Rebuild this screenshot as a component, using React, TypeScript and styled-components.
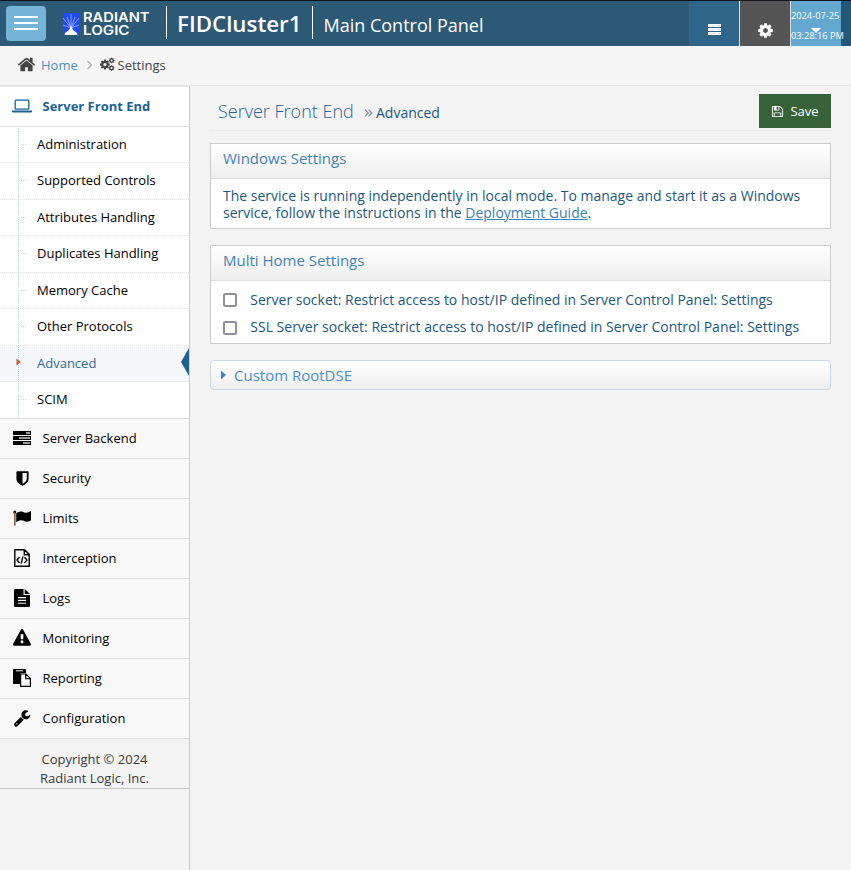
import React from "react";
import styled, { createGlobalStyle, css } from "styled-components";

const Global = createGlobalStyle`
  * { box-sizing: border-box; }
  html, body { margin: 0; padding: 0; background: #f3f3f3; }
  body { font-family: "Open Sans", sans-serif; font-size: 13px; color: #393939; }
  a { color: inherit; }
`;

const COG =
  "M1152 896q0-106-75-181t-181-75-181 75-75 181 75 181 181 75 181-75 75-181zm512-109v222q0 12-8 23t-20 13l-185 28q-19 54-39 91 35 50 107 138 10 12 10 25t-9 23q-27 37-99 108t-94 71q-12 0-26-9l-138-108q-44 23-91 38-16 136-29 186-7 28-36 28h-222q-14 0-24.500-8.500t-11.500-21.500l-28-184q-49-16-90-37l-141 107q-10 9-25 9-14 0-25-11-126-114-165-168-7-10-7-23 0-12 8-23 15-21 51-66.500t54-70.500q-27-50-41-99l-183-27q-13-2-21-12.500t-8-23.500v-222q0-12 8-23t19-13l186-28q14-46 39-92-40-57-107-138-10-12-10-24 0-10 9-23 26-36 98.500-107.500t94.500-71.500q13 0 26 10l138 107q44-23 91-38 16-136 29-186 7-28 36-28h222q14 0 24.500 8.500t11.500 21.500l28 184q49 16 90 37l142-107q9-9 24-9 13 0 25 10 129 119 165 170 7 8 7 22 0 12-8 23-15 21-51 66.500t-54 70.500q26 50 41 98l183 28q13 2 21 12.500t8 23.500z";
const HOME =
  "M1472 992v480q0 26-19 45t-45 19h-384v-384h-256v384h-384q-26 0-45-19t-19-45v-480q0-1 .5-3t.5-3l575-474 575 474q1 2 1 6zm223-69l-62 74q-8 9-21 11h-3q-13 0-21-7l-692-577-692 577q-12 8-24 7-13-2-21-11l-62-74q-8-10-7-23.500t11-21.500l719-599q32-26 76-26t76 26l244 204v-195q0-14 9-23t23-9h192q14 0 23 9t9 23v408l219 182q10 8 11 21.500t-7 23.500z";
const WRENCH =
  "M448 1472q0-26-19-45t-45-19-45 19-19 45 19 45 45 19 45-19 19-45zm644-420l-682 682q-37 37-90 37-52 0-91-37l-106-108q-38-36-38-90 0-53 38-91l681-681q39 98 114.500 173.500t173.500 114.500zm634-435q0 39-23 106-47 134-164.500 217.500t-258.500 83.500q-185 0-316.500-131.500t-131.500-316.500 131.500-316.500 316.500-131.500q58 0 121.500 16.500t107.500 46.500q16 11 16 28t-16 28l-293 169v224l193 107q5-3 79-48.500t135.500-81 70.500-35.500q15 0 23.500 10t8.500 25z";
const FLOPPY =
  "M512 1536h768v-384h-768v384zm896 0h128v-896q0-14-10-38.500t-20-34.500l-281-281q-10-10-34-20t-39-10v416q0 40-28 68t-68 28h-576q-40 0-68-28t-28-68v-416h-128v1280h128v-416q0-40 28-68t68-28h832q40 0 68 28t28 68v416zm-384-928v-320q0-13-9.500-22.500t-22.500-9.500h-192q-13 0-22.500 9.500t-9.500 22.500v320q0 13 9.500 22.500t22.500 9.500h192q13 0 22.500-9.500t9.500-22.500zm640 32v928q0 40-28 68t-68 28h-1344q-40 0-68-28t-28-68v-1344q0-40 28-68t68-28h928q40 0 88 20t76 48l280 280q28 28 48 76t20 88z";
const WARNING =
  "M1024 1375v-190q0-14-9.500-23.500t-22.500-9.500h-192q-13 0-22.500 9.500t-9.500 23.500v190q0 14 9.500 23.500t22.500 9.500h192q13 0 22.500-9.500t9.500-23.500zm-2-374l18-459q0-12-10-19-13-11-24-11h-220q-11 0-24 11-10 7-10 21l17 457q0 10 10 16.500t24 6.500h185q14 0 23.500-6.500t10.500-16.500zm-14-934l768 1408q35 63-2 126-17 29-46.500 46t-63.500 17h-1536q-34 0-63.500-17t-46.500-46q-37-63-2-126l768-1408q17-31 47-49t65-18 65 18 47 49z";
const SHIELD =
  "M1344 960v-640h-448v1137q119-63 213-137 235-184 235-360zm192-768v768q0 86-33.500 170.500t-83 150-118 127.500-126.500 103-121 77.500-89.500 49.500-42.500 20q-12 6-26 6t-26-6q-16-7-42.500-20t-89.500-49.500-121-77.500-126.500-103-118-127.500-83-150-33.500-170.500v-768q0-26 19-45t45-19h1152q26 0 45 19t19 45z";

const Glyph = ({ d, size }: { d: string; size: number }) => (
  <svg width={size} height={size} viewBox="0 0 1792 1792" fill="currentColor" overflow="visible">
    <path d={d} />
  </svg>
);

/* ---------- top bar ---------- */

const TopBar = styled.header`
  display: flex;
  height: 46px;
  border-top: 1px solid #101418;
  background: #2c5976;
  color: #fff;
`;
const MenuToggle = styled.button`
  display: flex;
  flex-direction: column;
  justify-content: center;
  gap: 4px;
  width: 40px;
  height: 35px;
  margin: 5px 0 0 6px;
  padding: 0 8px 1px;
  border: 0;
  border-radius: 4px;
  background: #75b3d7;
`;
const MenuLine = styled.span`
  height: 2px;
  background: #fff;
`;
const Logo = styled.div`
  display: flex;
  width: 103px;
  margin: 11px 0 0 17px;
  gap: 4px;
`;
const Wordmark = styled.svg`
  overflow: visible;
  font-family: Inter, sans-serif;
  font-size: 13px;
  font-weight: 600;
  fill: #fff;
`;
const Divider = styled.span`
  width: 1px;
  height: 33px;
  margin-top: 5px;
  background: #fff;
`;
const Cluster = styled.div`
  width: 145px;
  padding-left: 10px;
  font-size: 22.300px;
  font-weight: 580;
  line-height: 46px;
  white-space: nowrap;
`;
const PanelName = styled.div`
  flex: 1;
  padding-left: 10.500px;
  font-size: 18px;
  line-height: 48px;
  white-space: nowrap;
`;
const NavTile = styled.div<{ $bg: string; $w: number; $edge?: boolean }>`
  display: flex;
  justify-content: center;
  width: ${(p) => p.$w}px;
  padding-top: ${(p) => (p.$edge ? 21 : 23)}px;
  background: ${(p) => p.$bg};
  ${(p) => p.$edge && css`border-left: 1px solid #ddd;`}
`;
const Clock = styled.div`
  position: relative;
  width: 51px;
  border-left: 1px solid #ddd;
  background: #62a8d1;
  font-size: 9.250px;
  line-height: 20px;
  padding-top: 5px;
  white-space: nowrap;
`;
const Caret = styled.svg`
  position: absolute;
  left: 20px;
  top: 27px;
`;
const TopEnd = styled.div`
  width: 10px;
  background: #22587a;
`;

/* ---------- breadcrumb ---------- */

const Breadcrumb = styled.nav`
  display: flex;
  align-items: center;
  height: 40px;
  padding: 0 0 2px 17px;
  border-bottom: 1px solid #e5e5e5;
  background: #f5f5f5;
  line-height: 36px;
  color: #444;
`;
const HomeLink = styled.span`
  width: 45px;
  margin-left: 5px;
  color: #4c8fbd;
`;
const CrumbText = styled.span`
  margin-left: 2.500px;
`;

/* ---------- side bar ---------- */

const Body = styled.div`
  display: flex;
  height: 784px;
`;
const Sidebar = styled.aside`
  width: 190px;
  border-right: 1px solid #ccc;
  background: #f3f3f3;
`;
const Section = styled.div<{ $open?: boolean }>`
  display: flex;
  align-items: center;
  height: ${(p) => (p.$open ? 41 : 40)}px;
  padding: 0 0 1px 12px;
  border-bottom: 1px solid #e0e0e0;
  background: ${(p) => (p.$open ? "#fff" : "#f8f8f8")};
  color: ${(p) => (p.$open ? "#1d6095" : "#000")};
  font-weight: ${(p) => (p.$open ? 700 : 400)};
  ${(p) => p.$open && css`border-top: 1px solid #e5e5e5;`}
`;
const IconSlot = styled.span`
  display: flex;
  justify-content: center;
  align-items: center;
  width: 20px;
  height: 20px;
  margin-right: 10.500px;
`;
const SubMenu = styled.ul`
  position: relative;
  height: 292px;
  margin: 0;
  padding: 0;
  list-style: none;
  background: #fff;
  border-bottom: 1px solid #e0e0e0;
  &::before {
    content: "";
    position: absolute;
    z-index: 1;
    left: 18px;
    top: 1px;
    bottom: 0;
    border-left: 1px dotted #bcd5e8;
  }
`;
const SubItem = styled.li<{ $active?: boolean }>`
  position: relative;
  height: 36.450px;
  padding-left: 37px;
  line-height: 34px;
  color: ${(p) => (p.$active ? "#2b6a9b" : "#000")};
  background: ${(p) => (p.$active ? "#f5f7fb" : "#fff")};
  &:not(:last-child) {
    border-bottom: 1px dotted #e4e4e4;
  }
  &:last-child {
    height: 35.850px;
  }
  &::before {
    content: "";
    display: ${(p) => (p.$active ? "none" : "block")};
    position: absolute;
    left: 21px;
    top: 17px;
    width: 5px;
    border-top: 1px dotted #bcd5e8;
  }
`;
const ActiveMarks = styled.svg`
  position: absolute;
  z-index: 2;
  left: 0;
  top: -1px;
`;
const Copyright = styled.div`
  height: 50px;
  padding-top: 11px;
  border-bottom: 1px solid #c5c5c5;
  line-height: 19px;
  text-align: center;
  color: #393939;
`;

/* ---------- main ---------- */

const Main = styled.main`
  flex: 1;
  padding: 8px 20px 0;
`;
const PageHead = styled.div`
  display: flex;
  height: 37px;
  padding-left: 8px;
  border-bottom: 1px dotted #e2e2e2;
`;
const PageTitle = styled.h1`
  width: 146px;
  margin: 0;
  font-size: 18px;
  font-weight: 300;
  line-height: 35px;
  color: #2a6496;
  white-space: nowrap;
`;
const SubTitle = styled.div`
  display: flex;
  flex: 1;
  align-items: center;
  gap: 3px;
  height: 37px;
  font-size: 14px;
  color: #22587f;
`;
const SaveButton = styled.button`
  display: flex;
  align-items: center;
  justify-content: center;
  gap: 6px;
  width: 72px;
  height: 34px;
  padding: 0;
  border: 0;
  background: #376237;
  color: #fff;
  font: 13px "Open Sans", sans-serif;
`;
const Panel = styled.section<{ $top: number; $h: number }>`
  height: ${(p) => p.$h}px;
  margin-top: ${(p) => p.$top}px;
  border: 1px solid #ccc;
  background: #fff;
  color: #22587f;
  font-size: 14px;
`;
const PanelTitle = styled.h2`
  height: 35px;
  margin: 0;
  padding-left: 12px;
  border-bottom: 1px solid #ddd;
  background: linear-gradient(#fff, #eee);
  font-size: 15px;
  font-weight: 400;
  line-height: 28px;
  color: #4383b4;
`;
const PanelText = styled.p`
  margin: 0;
  padding: 8px 12px 0;
  line-height: 17px;
  white-space: nowrap;
`;
const GuideLink = styled.a`
  color: #3a80b5;
  text-decoration: underline;
`;
const CheckRow = styled.label`
  display: flex;
  align-items: center;
  height: 27.500px;
  padding-left: 12px;
  white-space: nowrap;
  &:first-of-type {
    margin-top: 4.500px;
  }
`;
const CheckBox = styled.input`
  appearance: none;
  width: 14px;
  height: 14px;
  margin: 2px 13.300px 0 0;
  border: 2px solid #8f8f9d;
  border-radius: 2px;
  background: #fff;
`;
const Collapsed = styled.button`
  display: flex;
  align-items: center;
  gap: 7px;
  width: 100%;
  height: 30px;
  margin-top: 16px;
  padding: 0 10px;
  border: 1px solid #cdd8e3;
  border-radius: 4px;
  background: linear-gradient(#fff, #eee);
  font: 15px "Open Sans", sans-serif;
  color: #4c8fcb;
`;

const LogoMark = () => (
  <svg width="16" height="24" viewBox="0 0 16 24">
    <rect y="1" width="16" height="22" fill="#2049f5" />
    <path
      d="M8 16V2M8 16L4 5M8 16l4-11M8 16L0 6M8 16l8-10M8 16l-8-3M8 16l8-3"
      stroke="#b9ccff"
      strokeWidth=".7"
      fill="none"
    />
    <path d="M8 14l2 4 4 3 .5 2h-13l.5-2 4-3z" fill="#fff" />
  </svg>
);
const Laptop = () => (
  <svg width="20" height="14" viewBox="0 0 20 14" fill="none">
    <rect x="3.200" y="1.200" width="13.600" height="9" rx=".8" stroke="#1d6095" strokeWidth="1.300" />
    <path d="M0 11.500h20v.7q0 1.300-1.500 1.300h-17Q0 13.500 0 12.200z" fill="#1d6095" />
  </svg>
);
const Backend = () => (
  <svg width="18" height="14" viewBox="0 0 18 14">
    <path d="M0 0h18v4H0zM0 5h18v4H0zM0 10h18v4H0z" />
    <path d="M13 1.300h4v1.400h-4zM6 6.300h11v1.400H6zM10 11.300h7v1.400h-7z" fill="#ccc" />
  </svg>
);
const Flag = () => (
  <svg width="19" height="16" viewBox="0 0 19 16">
    <circle cx="1.800" cy="1.900" r="1.500" />
    <path d="M1.200 2h1.300v13.500H1.200z" fill="#6b3a1a" />
    <path d="M3.200 3.200Q6 1 8.500 1.500c2.500.5 3.500 2 6 1 1.500-.6 3-1.800 3.500-1.200V10c-.3 1-3.500 2-5 1.700-2-.4-3-1.700-5.200-1.400-1.800.2-3 1.100-4.600 2z" />
  </svg>
);
const CodeFile = () => (
  <svg width="16" height="18" viewBox="0 0 16 18" fill="none" stroke="#000" strokeWidth="1.400">
    <path d="M.8.700h9.700l4.700 4.700v11.900H.8zM10.300.8v4.900h4.800M5.500 8.300L3 11l2.500 2.700M10.500 8.300L13 11l-2.500 2.700M8.900 7.300l-1.700 7.300" />
  </svg>
);
const TextFile = () => (
  <svg width="16" height="18" viewBox="0 0 16 18">
    <path d="M1 0h8.500v6H16v11q0 1-1 1H1q-1 0-1-1V1q0-1 1-1zM10.700 0L16 4.900h-5.300z" />
    <path d="M4 8.600h8M4 11.400h8M4 14.200h8" stroke="#f8f8f8" strokeWidth="1.100" />
  </svg>
);
const Paste = () => (
  <svg width="18" height="18" viewBox="0 0 18 18">
    <path d="M.7 0h11.600q.7 0 .7.700V4H8.500Q7 4 7 5.500V15H.7Q0 15 0 14.300V.7Q0 0 .7 0z" />
    <path d="M3 1.300h7v1H3z" fill="#f8f8f8" />
    <path d="M7.600 5h5.400l4.400 4.400v8H7.600zM12.700 5v4.700h4.700" fill="#f8f8f8" stroke="#000" strokeWidth="1.200" />
  </svg>
);
const Cogs = () => (
  <svg width="15" height="15" viewBox="0 0 15 15" fill="currentColor">
    <path d={COG} transform="translate(-.8 1.800) scale(.0064)" />
    <path d={COG} transform="translate(8.300 .2) scale(.0037)" />
    <path d={COG} transform="translate(8.300 7.700) scale(.0037)" />
  </svg>
);
const ServerStack = () => (
  <svg width="13" height="11" viewBox="0 0 13 11">
    <path d="M0 0h13v3H0zM0 4h13v3H0zM0 8h13v3H0z" fill="#fff" />
    <path d="M1 1.500h6M1 5.500h4M1 9.500h7" stroke="#d5dfe6" strokeWidth=".8" />
    <path d="M10.500 1.500h1M10.500 5.500h1M10.500 9.500h1" stroke="#8aa6ba" />
  </svg>
);

const subItems = [
  "Administration",
  "Supported Controls",
  "Attributes Handling",
  "Duplicates Handling",
  "Memory Cache",
  "Other Protocols",
  "Advanced",
  "SCIM",
];

const sections: [string, React.ReactNode][] = [
  ["Server Backend", <Backend />],
  ["Security", <Glyph d={SHIELD} size={17} />],
  ["Limits", <Flag />],
  ["Interception", <CodeFile />],
  ["Logs", <TextFile />],
  ["Monitoring", <Glyph d={WARNING} size={18} />],
  ["Reporting", <Paste />],
  ["Configuration", <Glyph d={WRENCH} size={18} />],
];

const checks = [
  "Server socket: Restrict access to host/IP defined in Server Control Panel: Settings",
  "SSL Server socket: Restrict access to host/IP defined in Server Control Panel: Settings",
];

export default function App() {
  return (
    <>
      <Global />
      <TopBar>
        <MenuToggle aria-label="Toggle menu">
          <MenuLine />
          <MenuLine />
          <MenuLine />
        </MenuToggle>
        <Logo>
          <LogoMark />
          <Wordmark width="68" height="24" viewBox="0 0 68 24">
            <text x="0" y="10" textLength="66.500" lengthAdjust="spacingAndGlyphs">RADIANT</text>
            <text x="0" y="22.500" textLength="46.500" lengthAdjust="spacingAndGlyphs">LOGIC</text>
          </Wordmark>
        </Logo>
        <Divider />
        <Cluster>FIDCluster1</Cluster>
        <Divider />
        <PanelName>Main Control Panel</PanelName>
        <NavTile $bg="#2f6589" $w={50}>
          <ServerStack />
        </NavTile>
        <NavTile $bg="#555" $w={51} $edge>
          <Glyph d={COG} size={17} />
        </NavTile>
        <Clock>
          <div>2024-07-25</div>
          <div>03:28:16 PM</div>
          <Caret width="10" height="5" viewBox="0 0 10 5">
            <path d="M0 0h10L5 5z" fill="#fff" />
          </Caret>
        </Clock>
        <TopEnd />
      </TopBar>
      <Breadcrumb>
        <Glyph d={HOME} size={19} />
        <HomeLink>Home</HomeLink>
        <svg width="14" height="10" viewBox="0 0 14 10" fill="none" stroke="#b2b6bf" strokeWidth="1.500">
          <path d="M1.500 1l4 4-4 4" />
        </svg>
        <Cogs />
        <CrumbText>Settings</CrumbText>
      </Breadcrumb>
      <Body>
        <Sidebar>
          <Section $open>
            <IconSlot><Laptop /></IconSlot>
            Server Front End
          </Section>
          <SubMenu>
            {subItems.map((name) => (
              <SubItem key={name} $active={name === "Advanced"}>
                {name}
                {name === "Advanced" && (
                  <ActiveMarks width="189" height="36" viewBox="0 0 189 36">
                    <path d="M16.500 13.500l4.500 3.500-4.500 3.500z" fill="#c86139" />
                    <path d="M189 3v28l-8-14z" fill="#20608f" />
                  </ActiveMarks>
                )}
              </SubItem>
            ))}
          </SubMenu>
          {sections.map(([name, icon]) => (
            <Section key={name}>
              <IconSlot>{icon}</IconSlot>
              {name}
            </Section>
          ))}
          <Copyright>
            Copyright © 2024
            <br />
            Radiant Logic, Inc.
          </Copyright>
        </Sidebar>
        <Main>
          <PageHead>
            <PageTitle>Server Front End</PageTitle>
            <SubTitle>
              <svg width="9" height="8" viewBox="0 0 9 8" fill="none" stroke="#8089a0" strokeWidth="1.200">
                <path d="M1 .7L4.300 4 1 7.300M4.600.7L7.900 4 4.600 7.300" />
              </svg>
              Advanced
            </SubTitle>
            <SaveButton>
              <Glyph d={FLOPPY} size={13} />
              Save
            </SaveButton>
          </PageHead>
          <Panel $top={12} $h={86}>
            <PanelTitle>Windows Settings</PanelTitle>
            <PanelText>
              The service is running independently in local mode. To manage and start it as a Windows
              <br />
              service, follow the instructions in the <GuideLink>Deployment Guide</GuideLink>.
            </PanelText>
          </Panel>
          <Panel $top={16} $h={99}>
            <PanelTitle>Multi Home Settings</PanelTitle>
            {checks.map((text) => (
              <CheckRow key={text}>
                <CheckBox type="checkbox" />
                {text}
              </CheckRow>
            ))}
          </Panel>
          <Collapsed>
            <svg width="6" height="10" viewBox="0 0 6 10">
              <path d="M0 0.500l5 4.500-5 4.500z" fill="#3a87c8" />
            </svg>
            Custom RootDSE
          </Collapsed>
        </Main>
      </Body>
    </>
  );
}
